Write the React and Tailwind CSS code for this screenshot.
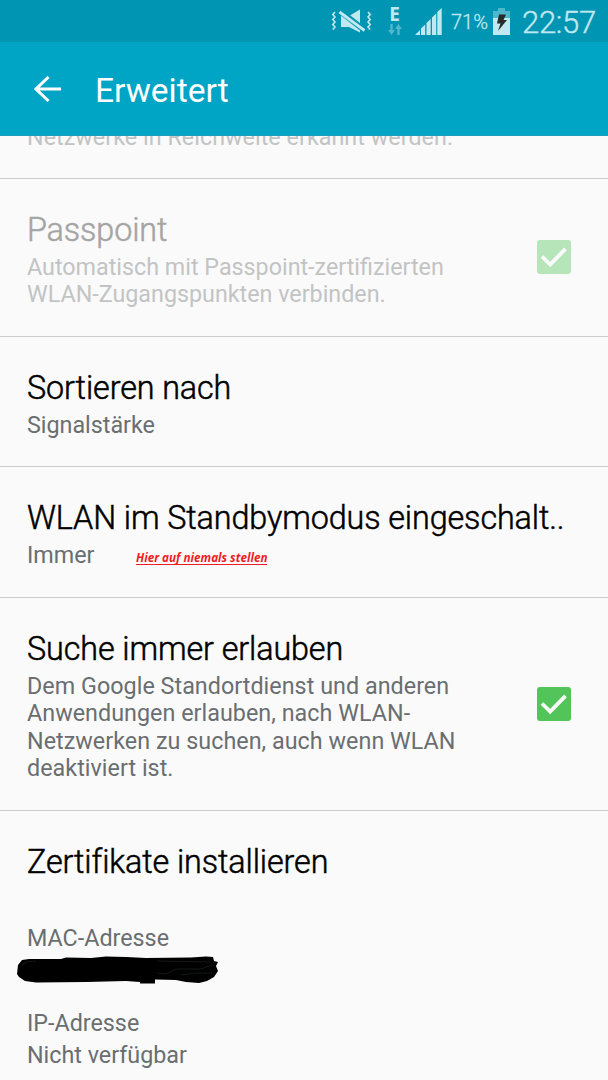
import React from "react";

const CheckBox = ({ disabled }) => (
  <svg
    viewBox="0 0 34 34"
    className={`mr-[37px] h-[34px] w-[34px] shrink-0 ${disabled ? "mb-[2px] text-[#b6e5ba]" : "text-[#53c45a]"}`}
  >
    <rect width="34" height="34" rx="3" fill="currentColor" />
    <path d="M5 16.5 L13.2 24.5 L28.5 8.8" fill="none" stroke="#fafafa" strokeWidth="3.8" />
  </svg>
);

const Title = ({ children, className = "" }) => (
  <h2
    className={`h-[42px] text-[32.3px] leading-[42px] font-light tracking-[-0.1px] whitespace-nowrap [-webkit-text-stroke:0.5px_currentColor] ${className}`}
  >
    {children}
  </h2>
);

const Sub = ({ children, className = "" }) => (
  <p className={`text-[23.3px] leading-[27.5px] whitespace-nowrap ${className}`}>{children}</p>
);

const StatusBar = () => (
  <div className="flex h-[42px] shrink-0 items-center bg-[#0095b3] pl-[331px] text-[#c1e8ef]">
    {/* vibrate / muted */}
    <svg viewBox="0 0 42 26" className="h-[26px] w-[42px] shrink-0">
      <path
        d="M4 4 L1.8 6.5 L4 9 L1.8 11.5 L4 14 L1.8 16.5 L4 19 L1.8 21.5 M37 4 L39.2 6.5 L37 9 L39.2 11.5 L37 14 L39.2 16.5 L37 19 L39.2 21.5"
        fill="none"
        stroke="currentColor"
        strokeWidth="1.6"
      />
      <path d="M10 8 H18 L29 1.5 V24.5 L18 19 H10 Z" fill="currentColor" />
      <path d="M7 1.5 L35 23.5" stroke="#0095b3" strokeWidth="6" />
      <path d="M8.5 4 L33.5 22.5" stroke="currentColor" strokeWidth="2.8" />
    </svg>
    <div className="mb-[3px] ml-[14px] flex w-[15px] flex-col items-center">
      <span className="font-['Noto_Sans',sans-serif] text-[19px] leading-[18px] font-bold">E</span>
      <svg viewBox="0 0 14 11" className="mt-[1px] h-[11px] w-[14px] text-[#53b7cb]">
        <path d="M2.3 0 H4.7 V6 H7 L3.5 11 L0 6 H2.3 Z M9.3 11 H11.7 V5 H14 L10.5 0 L7 5 H9.3 Z" fill="currentColor" />
      </svg>
    </div>
    <svg viewBox="0 0 27 27" className="ml-[13px] h-[27px] w-[27px] shrink-0">
      <path
        d="M0 27 L5 22 V27 Z M6 27 V20.5 L10.2 16.5 V27 Z M11.5 27 V15 L15.7 11 V27 Z M17 27 V9.5 L21.2 5.5 V27 Z M22.3 27 V4 L26.7 0 V27 Z"
        fill="currentColor"
      />
    </svg>
    <span className="mt-[2px] ml-[9px] w-[38px] text-[20px] font-light whitespace-nowrap [-webkit-text-stroke:0.3px_currentColor]">
      71%
    </span>
    <svg viewBox="0 0 17 27" className="ml-[4px] h-[27px] w-[17px] shrink-0">
      <path d="M5 0 H12 V3 H17 V10 H0 V3 H5 Z" fill="#4db8cb" />
      <path d="M0 10 H17 V27 H0 Z" fill="#c1e8ef" />
      <path d="M6 6.5 H13 L10.5 12 H14 L5 23 L7.5 15.5 H4 Z" fill="#272b2c" />
    </svg>
    <span className="mt-[4px] ml-[12px] text-[31px] font-light tracking-[-0.3px] whitespace-nowrap [-webkit-text-stroke:0.4px_currentColor]">
      22:57
    </span>
  </div>
);

const App = () => {
  return (
    <div className="flex h-[1080px] w-[608px] flex-col overflow-hidden bg-[#fafafa] font-['Roboto',sans-serif] text-[#696e71]">
      <StatusBar />

      <header className="flex h-[94px] shrink-0 items-center border-b border-[#1b9fbb] bg-[#00a5c5] pt-[4px] pl-[34px] text-white">
        <svg viewBox="0 0 28 26" className="mb-[3px] h-[26px] w-[28px]">
          <path d="M14.5 1 L2 13 L14.5 25 M2 13 H27" fill="none" stroke="currentColor" strokeWidth="3" />
        </svg>
        <h1 className="mt-[1px] ml-[33px] text-[33.5px] leading-[42px]">Erweitert</h1>
      </header>

      {/* last line of the entry scrolled under the header */}
      <div className="flex h-[43px] shrink-0 flex-col justify-end overflow-hidden border-b border-[#cdcdcd] pb-[27px] pl-[27px] text-[#c2c4c4]">
        <Sub className="tracking-[0.04px]">Netzwerke in Reichweite erkannt werden.</Sub>
      </div>

      <div className="flex h-[158px] shrink-0 items-center justify-between border-b border-[#cdcdcd] pl-[27px] text-[#c2c4c4]">
        <div className="h-full pt-[30px]">
          <Title className="text-[#a4a4a4]">Passpoint</Title>
          <Sub className="mt-[2.5px]">
            Automatisch mit Passpoint-zertifizierten
            <br />
            WLAN-Zugangspunkten verbinden.
          </Sub>
        </div>
        <CheckBox disabled />
      </div>

      <div className="h-[130px] shrink-0 border-b border-[#cdcdcd] pt-[30px] pl-[27px]">
        <Title className="text-black">Sortieren nach</Title>
        <Sub className="mt-[2.5px]">Signalstärke</Sub>
      </div>

      <div className="h-[131px] shrink-0 border-b border-[#cdcdcd] pt-[30px] pl-[27px]">
        <Title className="text-black">WLAN im Standbymodus eingeschalt..</Title>
        <div className="mt-[2.5px] flex items-center">
          <Sub className="w-[109px]">Immer</Sub>
          <span className="mt-[4px] border-b border-[#ee1c25] font-['Open_Sans',sans-serif] text-[11.7px] leading-[14px] font-bold whitespace-nowrap text-[#ee1c25] italic">
            Hier auf niemals stellen
          </span>
        </div>
      </div>

      <div className="flex h-[213px] shrink-0 items-center justify-between border-b border-[#cdcdcd] pl-[27px]">
        <div className="h-full pt-[30px]">
          <Title className="text-black">Suche immer erlauben</Title>
          <Sub className="mt-[2.5px] tracking-[0.04px]">
            Dem Google Standortdienst und anderen
            <br />
            Anwendungen erlauben, nach WLAN-
            <br />
            Netzwerken zu suchen, auch wenn WLAN
            <br />
            deaktiviert ist.
          </Sub>
        </div>
        <CheckBox />
      </div>

      <div className="pt-[30px] pl-[27px]">
        <Title className="text-black">Zertifikate installieren</Title>
        <Sub className="mt-[42px]">MAC-Adresse</Sub>
        {/* blacked out address */}
        <svg viewBox="0 0 204 28" className="mt-[3px] -ml-[11px] block h-[28px] w-[204px]">
          <path
            d="M1 18 L2 9 L6 4 L13 3 L45 3 L50 1.5 L75 2 L90 0.5 L110 1 L130 2 L175 1.5 L190 0.5 L197 1 L198 5 L202 6 L200 10 L202 15 L198 21 L191 25 L183 27 L170 26 L160 24 L139 23.5 L139 27.5 L124 27.5 L124 26 L110 25 L70 26 L20 26.5 L9 25 L3 21 Z"
            fill="#000"
          />
          <path
            d="M141 5 L194 6 M141 17 L150 18 L160 13 L185 13 L196 9 M165 19 L180 17 L196 17 M6 9 L10 6 L20 5"
            fill="none"
            stroke="#151717"
            strokeWidth="1.2"
          />
        </svg>
        <Sub className="mt-[26px]">IP-Adresse</Sub>
        <Sub className="mt-[4.5px]">Nicht verfügbar</Sub>
      </div>
    </div>
  );
};

export default App;
